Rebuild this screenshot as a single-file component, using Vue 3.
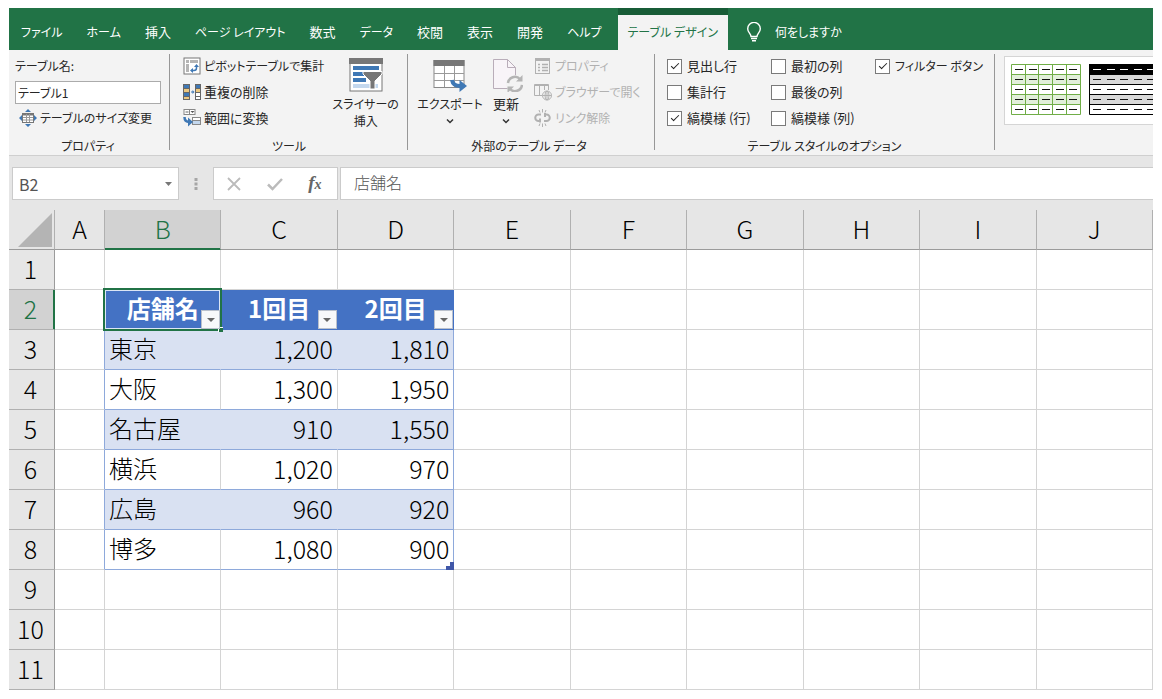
<script setup>
import { ref } from 'vue'

const tabs = ['ファイル', 'ホーム', '挿入', 'ページ レイアウト', '数式', 'データ', '校閲', '表示', '開発', 'ヘルプ', 'テーブル デザイン']
const activeTab = ref('テーブル デザイン')
const tableName = ref('テーブル1')
const cellName = ref('B2')
const formula = ref('店舗名')

const options = ref([
  { label: '見出し行', on: true },
  { label: '集計行', on: false },
  { label: '縞模様 (行)', on: true },
  { label: '最初の列', on: false },
  { label: '最後の列', on: false },
  { label: '縞模様 (列)', on: false },
  { label: 'フィルター ボタン', on: true },
])

const columns = ['A', 'B', 'C', 'D', 'E', 'F', 'G', 'H', 'I', 'J']
const data = {
  2: { B: '店舗名', C: '1回目', D: '2回目' },
  3: { B: '東京', C: '1,200', D: '1,810' },
  4: { B: '大阪', C: '1,300', D: '1,950' },
  5: { B: '名古屋', C: '910', D: '1,550' },
  6: { B: '横浜', C: '1,020', D: '970' },
  7: { B: '広島', C: '960', D: '920' },
  8: { B: '博多', C: '1,080', D: '900' },
}

const isKana = (text) => /[ァ-ヶ]/.test(text)

function cellClass(row, col) {
  const inTable = row >= 2 && row <= 8 && 'BCD'.includes(col)
  return {
    head: inTable && row === 2,
    body: inTable && row > 2,
    band: inTable && row > 2 && row % 2 === 1,
    number: inTable && row > 2 && col !== 'B',
    edge: inTable && col === 'D',
    before: col === 'A' && row > 2 && row <= 8,
    selected: row === 2 && col === 'B',
  }
}
</script>

<template>
  <div class="window">
    <nav class="tabs">
      <button
        v-for="t in tabs"
        :key="t"
        type="button"
        class="tab"
        :class="{ active: t === activeTab, kana: isKana(t) }"
        @click="activeTab = t"
      >{{ t }}</button>
      <button type="button" class="tell kana">
        <svg width="16" height="20" viewBox="0 0 16 20" fill="none" stroke="#fff" stroke-width="1.4">
          <path d="M5 14.5C5 11.5 1.7 10.500 1.700 6.700A6 6 0 0 1 14.300 6.700C14.300 10.500 11 11.500 11 14.500Z" />
          <path d="M5 16.500H11M6 18.800H10" />
        </svg>
        何をしますか
      </button>
    </nav>

    <div class="ribbon">
      <section class="group props">
        <div class="rows">
          <label for="table-name" class="kana">テーブル名:</label>
          <input id="table-name" v-model="tableName" class="table-name kana" type="text" />
          <button type="button" class="small resize kana">
            <svg width="18" height="18" viewBox="0 0 18 18">
              <path d="M9 0l3 3H6zM9 18l3-3H6zM0 9l3-3v6zM18 9l-3-3v6z" fill="#3f78b5" />
              <rect x="3.500" y="4.500" width="11" height="9" fill="#fff" stroke="#777" />
              <path d="M3 5.500h12" stroke="#777" stroke-width="2" />
              <path d="M7.500 5v8M10.500 5v8M4 8.500h10M4 11h10" stroke="#999" />
            </svg>
            テーブルのサイズ変更
          </button>
        </div>
        <h2>プロパティ</h2>
      </section>
      <i class="divider"></i>

      <section class="group tools">
        <div class="cols">
          <div class="rows">
            <button type="button" class="small kana">
              <svg width="18" height="18" viewBox="0 0 18 18">
                <rect x="1" y="1" width="16" height="16" fill="#fff" stroke="#777" />
                <path d="M3 3h3v3H3zM7 3h8v3H7zM3 7h3v8H3z" fill="#b5b5b5" />
                <path d="M8.500 13.500H11q2.500 0 2.500-2.500V9.500" fill="none" stroke="#3f78b5" stroke-width="1.500" />
                <path d="M10 11L7 13.500l3 2.500zM11 10h5l-2.500-3z" fill="#3f78b5" />
              </svg>
              ピボットテーブルで集計
            </button>
            <button type="button" class="small">
              <svg width="18" height="18" viewBox="0 0 18 18">
                <rect x="0" y="1" width="7" height="16" fill="#666" />
                <path d="M1 2h5v3H1zM1 10h5v3H1z" fill="#3f78b5" />
                <path d="M1 6h5v3H1zM1 14h5v2H1z" fill="#edc87e" />
                <path d="M8 9h2" stroke="#3f78b5" />
                <path d="M9.500 7L11.500 9l-2 2z" fill="#3f78b5" />
                <rect x="12" y="1" width="6" height="16" fill="#666" />
                <path d="M13 2h4v3h-4z" fill="#3f78b5" />
                <path d="M13 6h4v3h-4z" fill="#edc87e" />
                <path d="M13 10h4v3h-4zM13 14h4v2h-4z" fill="#fff" />
              </svg>
              重複の削除
            </button>
            <button type="button" class="small">
              <svg width="18" height="18" viewBox="0 0 18 18">
                <rect x="1" y=".5" width="11" height="5" fill="#fff" stroke="#888" />
                <path d="M2.500 3h3" stroke="#666" />
                <path d="M7.500 2h4L9.500 4z" fill="#555" />
                <path d="M6.500 1v5" stroke="#888" />
                <rect x="9.500" y="8.500" width="8" height="3" fill="#fff" stroke="#888" />
                <rect x="9.500" y="11.500" width="8" height="4" fill="#c4d8ee" stroke="#888" />
                <path d="M1.500 8q0 5 5 5" fill="none" stroke="#3f78b5" stroke-width="2.500" />
                <path d="M5 8.500l5 4.500-5 4.500z" fill="#3f78b5" />
              </svg>
              範囲に変換
            </button>
          </div>
          <button type="button" class="large slicer kana">
            <svg width="34" height="34" viewBox="0 0 34 34">
              <rect x="1" y="1" width="32" height="32" fill="#fff" stroke="#777" />
              <path d="M0 0h34v6H0z" fill="#777" />
              <path d="M4 8h26v4H4zM4 14h15v4H4zM4 20h13v4H4z" fill="#3f78b5" />
              <path d="M4 26h25v4H4z" fill="#c4d8ee" />
              <path d="M14 13.500h19v2.500l-7 7v8h-5v-8l-7-7z" fill="#777" stroke="#fff" />
            </svg>
            <span>スライサーの<br />挿入</span>
          </button>
        </div>
        <h2>ツール</h2>
      </section>
      <i class="divider"></i>

      <section class="group external">
        <div class="cols">
          <button type="button" class="large export kana">
            <svg width="34" height="34" viewBox="0 0 34 34">
              <rect x="1" y="2.500" width="30" height="27" fill="#fff" stroke="#888" />
              <path d="M.5 2h31v6H.5z" fill="#777" />
              <path d="M11.500 8v21M21.500 8v21M1 15.500h30M1 22.500h30" stroke="#999" />
              <path d="M19 22q1 6 8 6" fill="none" stroke="#3f78b5" stroke-width="4" />
              <path d="M26.500 22l7.500 6-7.500 6z" fill="#3f78b5" />
            </svg>
            <span>エクスポート</span>
            <svg class="chevron" width="8" height="6" viewBox="0 0 8 6"><path d="M1 1.500l3 3 3-3" fill="none" stroke="#333" stroke-width="1.500" /></svg>
          </button>
          <button type="button" class="large refresh">
            <svg width="34" height="34" viewBox="0 0 34 34">
              <path d="M4.500 1.500h14l8 8v21h-22z" fill="#f8f4f8" stroke="#b9adb9" />
              <path d="M18.500 1.500v8h8" fill="none" stroke="#b9adb9" />
              <circle cx="26" cy="26" r="9" fill="#f3f3f3" />
              <path d="M19 25a7 7 0 0 1 12-4M33 27a7 7 0 0 1-12 4" fill="none" stroke="#b4b4b4" stroke-width="2.500" />
              <path d="M33.500 17v6.500H27zM18.500 35v-6.500H25z" fill="#b4b4b4" />
            </svg>
            <span>更新</span>
            <svg class="chevron" width="8" height="6" viewBox="0 0 8 6"><path d="M1 1.500l3 3 3-3" fill="none" stroke="#333" stroke-width="1.500" /></svg>
          </button>
          <div class="rows">
            <button type="button" class="small kana" disabled>
              <svg width="18" height="18" viewBox="0 0 18 18" fill="none" stroke="#b1b1b1">
                <rect x="1.500" y="1.500" width="14" height="15" />
                <path d="M1 3h15" stroke-width="2" />
                <path d="M4 7.500h2M4 10.500h2M4 13.500h2M8 7.500h6M8 10.500h6M8 13.500h6" stroke-width="1.400" />
              </svg>
              プロパティ
            </button>
            <button type="button" class="small kana" disabled>
              <svg width="18" height="18" viewBox="0 0 18 18" fill="none" stroke="#b1b1b1">
                <path d="M8 12.500H.5v-11h14V7M.5 2.500h14M5.500 2v10M10.500 2v5" />
                <circle cx="13" cy="12.500" r="4.500" />
                <path d="M8.500 12.500h9M13 8v9" />
                <ellipse cx="13" cy="12.500" rx="2" ry="4.500" />
              </svg>
              ブラウザーで開く
            </button>
            <button type="button" class="small kana" disabled>
              <svg width="18" height="18" viewBox="0 0 18 18" fill="none" stroke="#b1b1b1">
                <path d="M7 5.500H4.500a3.200 3.200 0 0 0 0 6.500H7M6 9.500v4M10 5.500h2.500a3.200 3.200 0 0 1 0 6.500H10M11 4v4" stroke-width="2" />
                <path d="M8.500 0v3.500M5 1l1 2.500M12 1l-1 2.500M8.500 14.500v3.500M5 17l1-2.500M12 17l-1-2.500" />
              </svg>
              リンク解除
            </button>
          </div>
        </div>
        <h2>外部のテーブル データ</h2>
      </section>
      <i class="divider"></i>

      <section class="group styles">
        <div class="checks">
          <label v-for="o in options" :key="o.label" :class="{ kana: isKana(o.label) }"><input v-model="o.on" type="checkbox" />{{ o.label }}</label>
        </div>
        <h2>テーブル スタイルのオプション</h2>
      </section>
      <i class="divider"></i>

      <div class="gallery">
        <button type="button" aria-label="緑の縞模様">
          <svg width="70" height="52" viewBox="0 0 70 52">
            <rect x="1" y="1" width="68" height="50" fill="#fff" />
            <path d="M1 11h68v10H1zM1 31h68v10H1z" fill="#e2efda" />
            <path d="M.5.5h69v50H.5zM1 10.500H69M1 20.500H69M1 30.500H69M1 40.500H69M14.500 1v50M27.500 1v50M41.500 1v50M55.500 1v50" fill="none" stroke="#70ad47" />
            <path v-for="y in 5" :key="y" :d="`M4 ${y * 10 - 4.5}h8M18 ${y * 10 - 4.5}h8M31 ${y * 10 - 4.5}h8M45 ${y * 10 - 4.5}h8M58 ${y * 10 - 4.5}h8`" stroke="#111" />
          </svg>
        </button>
        <button type="button" aria-label="黒の縞模様">
          <svg width="70" height="52" viewBox="0 0 70 52">
            <rect x="1" y="1" width="68" height="50" fill="#fff" />
            <path d="M1 11h68v10H1zM1 31h68v10H1z" fill="#d9d9d9" />
            <path d="M.5.5h69v50H.5zM1 10.500H69M1 20.500H69M1 30.500H69M1 40.500H69" fill="none" stroke="#000" />
            <path d="M0 0h70v11H0z" />
            <path v-for="y in 5" :key="y" :d="`M4 ${y * 10 - 4.5}h8M18 ${y * 10 - 4.5}h8M31 ${y * 10 - 4.5}h8M45 ${y * 10 - 4.5}h8M58 ${y * 10 - 4.5}h8`" :stroke="y === 1 ? '#fff' : '#111'" />
          </svg>
        </button>
      </div>
    </div>

    <div class="formula-bar">
      <div class="name-box">
        <input v-model="cellName" type="text" aria-label="名前ボックス" />
        <button type="button" aria-label="名前の一覧">
          <svg width="7" height="4" viewBox="0 0 7 4"><path d="M0 0h7L3.500 4z" fill="#777" /></svg>
        </button>
      </div>
      <svg class="dots" width="4" height="14" viewBox="0 0 4 14"><path d="M.5 1h3v3h-3zM.5 5.500h3v3h-3zM.5 10h3v3h-3z" fill="#a6a6a6" /></svg>
      <div class="commands">
        <button type="button" aria-label="キャンセル">
          <svg width="16" height="14" viewBox="0 0 16 14"><path d="M2 1l12 12M14 1L2 13" stroke="#bbb" stroke-width="1.800" /></svg>
        </button>
        <button type="button" aria-label="入力">
          <svg width="16" height="14" viewBox="0 0 16 14"><path d="M1 7.500l4.500 4.500L15 2" fill="none" stroke="#bbb" stroke-width="2.500" /></svg>
        </button>
        <button type="button" class="fx" aria-label="関数の挿入">f<small>x</small></button>
      </div>
      <input v-model="formula" class="formula" type="text" aria-label="数式バー" />
    </div>

    <table class="sheet">
      <colgroup>
        <col class="c-row" /><col class="c-a" /><col v-for="n in 9" :key="n" />
      </colgroup>
      <thead>
        <tr>
          <th class="corner">
            <svg width="34" height="34" viewBox="0 0 34 34"><path d="M34 0v34H0z" fill="#b4b4b4" /></svg>
          </th>
          <th v-for="c in columns" :key="c" scope="col" :class="{ current: c === 'B' }">{{ c }}</th>
        </tr>
      </thead>
      <tbody>
        <tr v-for="r in 11" :key="r">
          <th scope="row" :class="{ current: r === 2 }">{{ r }}</th>
          <td v-for="c in columns" :key="c" :class="cellClass(r, c)">
            {{ data[r]?.[c] }}
            <button v-if="cellClass(r, c).head" type="button" class="filter" :aria-label="data[r][c] + 'のフィルター'">
              <svg width="8" height="4" viewBox="0 0 8 4"><path d="M0 0h8L4 4z" fill="#666" /></svg>
            </button>
            <i v-if="r === 2 && c === 'B'" class="cursor"></i>
            <svg v-if="r === 8 && c === 'D'" class="grip" width="8" height="8" viewBox="0 0 8 8"><path d="M4 0h4v8H0V4h4z" fill="#4057a8" /></svg>
          </td>
        </tr>
      </tbody>
    </table>
  </div>
</template>

<style>
body {
  background: #fff;
}
</style>

<style scoped>
.window {
  margin: 8px 9px;
  background: #e6e6e6;
  color: #262626;
  font: 13px/18px "Noto Sans CJK JP", "Liberation Sans", sans-serif;
  font-feature-settings: "palt";
}
button,
input {
  margin: 0;
  padding: 0;
  border: 0;
  background: none;
  color: inherit;
  font: inherit;
  font-feature-settings: inherit;
  white-space: nowrap;
}
svg {
  flex: none;
  display: block;
}

.tabs {
  display: flex;
  height: 42px;
  background: #217346;
  color: #fff;
}
.tab {
  padding: 5px 12px 0;
}
.tab.active {
  margin-left: 4px;
  padding: 0 10px 2px;
  border-top: 7px solid #185c37;
  background: #f3f3f3;
  color: #217346;
}
.tell {
  display: flex;
  align-items: center;
  gap: 13px;
  padding: 6px 18px 0;
}
.kana {
  font-size: 12px;
}

.ribbon {
  display: flex;
  height: 105px;
  overflow: hidden;
  border-bottom: 1px solid #cfcfcf;
  background: #f3f3f3;
}
.group {
  flex: none;
  box-sizing: border-box;
  padding-top: 3px;
}
.props { width: 160px; padding-inline: 6px 8px; }
.tools { width: 237px; padding-left: 13px; }
.external { width: 246px; padding-left: 8px; }
.styles { width: 339px; padding-left: 12px; }
.divider {
  flex: none;
  width: 1px;
  margin: 4px 0 5px;
  background: #979797;
}
h2 {
  margin: 6px 0 0;
  font-size: 12px;
  line-height: 18px;
  font-weight: 400;
  text-align: center;
}
.tools h2,
.styles h2,
.external h2 {
  padding-right: 12px;
}
.cols {
  display: flex;
  justify-content: space-between;
}
.external .cols {
  justify-content: flex-start;
}
.rows {
  display: grid;
  grid-template-rows: repeat(3, 26px);
  align-items: center;
  justify-items: start;
}
.props .rows {
  justify-items: stretch;
}
.table-name {
  box-sizing: border-box;
  width: 100%;
  height: 23px;
  padding-left: 2px;
  border: 1px solid #ababab;
  background: #fff;
}
.small {
  display: flex;
  align-items: center;
  gap: 3px;
}
.small:disabled {
  color: #b1b1b1;
}
.resize {
  padding-left: 4px;
}
.large {
  display: flex;
  flex-direction: column;
  align-items: center;
  gap: 3px;
  height: 78px;
  padding-top: 5px;
  line-height: 17px;
}
.slicer { width: 84px; }
.export { width: 68px; }
.refresh { width: 44px; }
.external .rows { padding-left: 6px; }
.chevron {
  margin-top: 3px;
}
.checks {
  display: grid;
  grid-auto-flow: column;
  grid-template-rows: repeat(3, 26px);
  grid-template-columns: 104px 104px;
  align-items: center;
}
.checks label {
  display: flex;
  align-items: center;
  gap: 5px;
  white-space: nowrap;
}
.checks input {
  appearance: none;
  display: grid;
  place-items: center;
  box-sizing: border-box;
  width: 15px;
  height: 15px;
  border: 1px solid #7a7a7a;
  background: #fff;
}
.checks input:checked::after {
  content: "";
  width: 7px;
  height: 3px;
  margin-bottom: 3px;
  border: solid #222;
  border-width: 0 0 1px 1px;
  transform: rotate(-45deg);
}
.gallery {
  display: flex;
  flex: 1;
  gap: 8px;
  box-sizing: border-box;
  height: 69px;
  margin: 6px 0 0 9px;
  padding: 7px 0 0 6px;
  overflow: hidden;
  border: 1px solid #d5d5d5;
  border-right: 0;
  background: #fff;
}
.gallery button {
  flex: none;
  height: 52px;
}

.formula-bar {
  display: flex;
  align-items: stretch;
  height: 33px;
  padding: 11px 0 10px 3px;
  color: #555;
  font-size: 16px;
}
.name-box,
.commands,
.formula {
  box-sizing: border-box;
  border: 1px solid #cbcbcb;
  background: #fff;
}
.name-box {
  display: flex;
  width: 167px;
}
.name-box input {
  flex: 1;
  min-width: 0;
  padding: 1px 0 0 6px;
}
.name-box button {
  padding: 0 6px;
}
.dots {
  align-self: center;
  margin: 0 15px;
}
.commands {
  display: flex;
  align-items: center;
  justify-content: space-around;
  width: 125px;
  margin-right: 2px;
  padding-right: 3px;
}
.fx {
  color: #666;
  font: italic 700 19px/20px "Liberation Serif", serif;
}
.fx small {
  font-size: 14px;
}
.formula {
  flex: 1;
  min-width: 0;
  padding: 0 0 3px 13px;
  border-right: 0;
  font-weight: 300;
}

.sheet {
  width: 100%;
  table-layout: fixed;
  border-collapse: separate;
  border-spacing: 0;
  background: #fff;
  color: #000;
  font-size: 24px;
  line-height: 36px;
  font-weight: 300;
  font-feature-settings: normal;
}
.c-row { width: 46px; }
.c-a { width: 50px; }
th,
td {
  box-sizing: border-box;
  height: 40px;
  padding: 0 0 3px;
  border: solid #d4d4d4;
  border-width: 0 1px 1px 0;
}
th {
  border-color: #b0b0b0;
  background: #e6e6e6;
  font-size: 25px;
  font-weight: 300;
  text-align: center;
}
tbody th {
  padding-right: 2px;
}
thead th {
  border-bottom-color: #9b9b9b;
}
tbody th {
  border-right-color: #9b9b9b;
}
th.current {
  background: #d2d2d2;
  color: #217346;
}
thead th.current {
  box-shadow: inset 0 -1px #217346;
  border-bottom-color: #217346;
}
tbody th.current {
  box-shadow: inset -1px 0 #217346;
  border-right-color: #217346;
}
th.corner {
  padding: 0;
}
.corner svg {
  margin: 0 2px 0 auto;
}
td {
  position: relative;
}
td.before {
  border-right-color: #8ea9db;
}
td.head {
  border-color: #4472c4;
  background: #4472c4;
  color: #fff;
  font-weight: 700;
  text-align: center;
}
td.body {
  padding-inline: 4px;
  border-bottom-color: #8ea9db;
}
td.band {
  border-right-color: #d9e1f2;
  background: #d9e1f2;
}
td.number {
  font-size: 25px;
  text-align: right;
}
td.body.edge {
  border-right-color: #8ea9db;
}
.filter {
  position: absolute;
  right: 0;
  bottom: 0;
  display: grid;
  place-items: center;
  box-sizing: border-box;
  width: 19px;
  height: 19px;
  border: 1px solid #b9c0cc;
  background: #f7f8fa;
}
.cursor {
  position: absolute;
  inset: -2px -2px -2px -2px;
  border: 2px solid #217346;
  box-shadow: inset 0 0 0 1px #dce6f5;
}
.cursor::after {
  content: "";
  position: absolute;
  right: -3px;
  bottom: -3px;
  width: 4px;
  height: 4px;
  border: solid #fff;
  border-width: 1px 0 0 1px;
  background: #217346;
}
td.selected {
  z-index: 1;
}
.selected .filter {
  z-index: 1;
}
.grip {
  position: absolute;
  right: -1px;
  bottom: -1px;
}
</style>
